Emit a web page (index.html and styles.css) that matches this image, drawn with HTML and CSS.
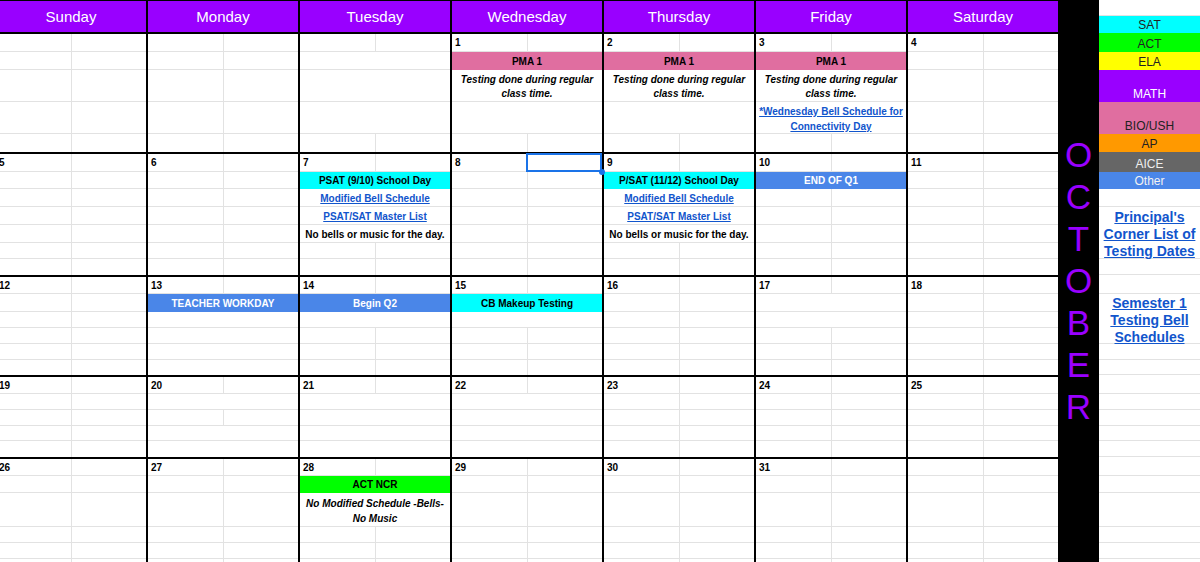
FILE: index.html
```html
<!DOCTYPE html>
<html>
<head>
<meta charset="utf-8">
<link rel="stylesheet" href="styles.css">
</head>
<body>
<div class="sheet">
  <div class="cal">
    <div class="hdr">
      <div class="hcell">Sunday</div>
      <div class="hcell">Monday</div>
      <div class="hcell">Tuesday</div>
      <div class="hcell">Wednesday</div>
      <div class="hcell">Thursday</div>
      <div class="hcell">Friday</div>
      <div class="hcell">Saturday</div>
    </div>

    <div class="week w1">
      <div class="day"><div class="r s"></div><div class="r s"></div><div class="r s"></div><div class="r s"></div><div class="r s"></div></div>
      <div class="day"><div class="r s"></div><div class="r s"></div><div class="r s"></div><div class="r s"></div><div class="r s"></div></div>
      <div class="day"><div class="r s"></div><div class="r"></div><div class="r"></div><div class="r"></div><div class="r s"></div></div>
      <div class="day">
        <div class="r s d"><span class="num">1</span></div>
        <div class="r bar pink">PMA 1</div>
        <div class="r note">Testing done during regular class time.</div>
        <div class="r"></div>
        <div class="r s"></div>
      </div>
      <div class="day">
        <div class="r s d"><span class="num">2</span></div>
        <div class="r bar pink">PMA 1</div>
        <div class="r note">Testing done during regular class time.</div>
        <div class="r"></div>
        <div class="r s"></div>
      </div>
      <div class="day">
        <div class="r s d"><span class="num">3</span></div>
        <div class="r bar pink">PMA 1</div>
        <div class="r note">Testing done during regular class time.</div>
        <div class="r wrap"><a class="lnk">*Wednesday Bell Schedule for Connectivity Day</a></div>
        <div class="r s"></div>
      </div>
      <div class="day">
        <div class="r s d"><span class="num">4</span></div>
        <div class="r s"></div><div class="r s"></div><div class="r s"></div><div class="r s"></div>
      </div>
    </div>

    <div class="week w2">
      <div class="day">
        <div class="r s d"><span class="num">5</span></div>
        <div class="r s"></div><div class="r s"></div><div class="r s"></div><div class="r s"></div><div class="r s"></div><div class="r s"></div>
      </div>
      <div class="day">
        <div class="r s d"><span class="num">6</span></div>
        <div class="r s"></div><div class="r s"></div><div class="r s"></div><div class="r s"></div><div class="r s"></div><div class="r s"></div>
      </div>
      <div class="day">
        <div class="r s d"><span class="num">7</span></div>
        <div class="r bar cyan">PSAT (9/10) School Day</div>
        <div class="r txt"><a class="lnk">Modified Bell Schedule</a></div>
        <div class="r txt"><a class="lnk">PSAT/SAT Master List</a></div>
        <div class="r txt">No bells or music for the day.</div>
        <div class="r s"></div><div class="r s"></div>
      </div>
      <div class="day">
        <div class="r s d"><span class="num">8</span><span class="sel"><span class="dot"></span></span></div>
        <div class="r s"></div><div class="r s"></div><div class="r s"></div><div class="r s"></div><div class="r s"></div><div class="r s"></div>
      </div>
      <div class="day">
        <div class="r s d"><span class="num">9</span></div>
        <div class="r bar cyan">P/SAT (11/12) School Day</div>
        <div class="r txt"><a class="lnk">Modified Bell Schedule</a></div>
        <div class="r txt"><a class="lnk">PSAT/SAT Master List</a></div>
        <div class="r txt">No bells or music for the day.</div>
        <div class="r s"></div><div class="r s"></div>
      </div>
      <div class="day">
        <div class="r s d"><span class="num">10</span></div>
        <div class="r bar blue">END OF Q1</div>
        <div class="r s"></div><div class="r s"></div><div class="r s"></div><div class="r s"></div><div class="r s"></div>
      </div>
      <div class="day">
        <div class="r s d"><span class="num">11</span></div>
        <div class="r s"></div><div class="r s"></div><div class="r s"></div><div class="r s"></div><div class="r s"></div><div class="r s"></div>
      </div>
    </div>

    <div class="week w3">
      <div class="day">
        <div class="r s d"><span class="num">12</span></div>
        <div class="r s"></div><div class="r s"></div><div class="r s"></div><div class="r s"></div><div class="r s"></div>
      </div>
      <div class="day">
        <div class="r s d"><span class="num">13</span></div>
        <div class="r bar blue">TEACHER WORKDAY</div>
        <div class="r"></div><div class="r"></div><div class="r"></div><div class="r"></div>
      </div>
      <div class="day">
        <div class="r s d"><span class="num">14</span></div>
        <div class="r bar blue">Begin Q2</div>
        <div class="r"></div><div class="r s"></div><div class="r s"></div><div class="r s"></div>
      </div>
      <div class="day">
        <div class="r s d"><span class="num">15</span></div>
        <div class="r bar cyan">CB Makeup Testing</div>
        <div class="r"></div><div class="r s"></div><div class="r s"></div><div class="r s"></div>
      </div>
      <div class="day">
        <div class="r s d"><span class="num">16</span></div>
        <div class="r s"></div><div class="r s"></div><div class="r s"></div><div class="r s"></div><div class="r s"></div>
      </div>
      <div class="day">
        <div class="r s d"><span class="num">17</span></div>
        <div class="r"></div><div class="r"></div><div class="r s"></div><div class="r s"></div><div class="r s"></div>
      </div>
      <div class="day">
        <div class="r s d"><span class="num">18</span></div>
        <div class="r s"></div><div class="r s"></div><div class="r s"></div><div class="r s"></div><div class="r s"></div>
      </div>
    </div>

    <div class="week w4">
      <div class="day">
        <div class="r s d"><span class="num">19</span></div>
        <div class="r s"></div><div class="r s"></div><div class="r s"></div><div class="r s"></div>
      </div>
      <div class="day">
        <div class="r s d"><span class="num">20</span></div>
        <div class="r"></div><div class="r s"></div><div class="r"></div><div class="r"></div>
      </div>
      <div class="day">
        <div class="r s d"><span class="num">21</span></div>
        <div class="r"></div><div class="r"></div><div class="r"></div><div class="r"></div>
      </div>
      <div class="day">
        <div class="r s d"><span class="num">22</span></div>
        <div class="r"></div><div class="r"></div><div class="r"></div><div class="r"></div>
      </div>
      <div class="day">
        <div class="r s d"><span class="num">23</span></div>
        <div class="r s"></div><div class="r s"></div><div class="r s"></div><div class="r s"></div>
      </div>
      <div class="day">
        <div class="r s d"><span class="num">24</span></div>
        <div class="r s"></div><div class="r s"></div><div class="r s"></div><div class="r s"></div>
      </div>
      <div class="day">
        <div class="r s d"><span class="num">25</span></div>
        <div class="r s"></div><div class="r s"></div><div class="r s"></div><div class="r s"></div>
      </div>
    </div>

    <div class="week w5">
      <div class="day">
        <div class="r s d"><span class="num">26</span></div>
        <div class="r s"></div><div class="r s"></div><div class="r s"></div><div class="r s"></div><div class="r s"></div>
      </div>
      <div class="day">
        <div class="r s d"><span class="num">27</span></div>
        <div class="r s"></div><div class="r s"></div><div class="r s"></div><div class="r s"></div><div class="r s"></div>
      </div>
      <div class="day">
        <div class="r s d"><span class="num">28</span></div>
        <div class="r bar green">ACT NCR</div>
        <div class="r note n2">No Modified Schedule -Bells- No Music</div>
        <div class="r s"></div><div class="r s"></div><div class="r s"></div>
      </div>
      <div class="day">
        <div class="r s d"><span class="num">29</span></div>
        <div class="r s"></div><div class="r s"></div><div class="r s"></div><div class="r s"></div><div class="r s"></div>
      </div>
      <div class="day">
        <div class="r s d"><span class="num">30</span></div>
        <div class="r s"></div><div class="r s"></div><div class="r s"></div><div class="r s"></div><div class="r s"></div>
      </div>
      <div class="day">
        <div class="r s d"><span class="num">31</span></div>
        <div class="r s"></div><div class="r s"></div><div class="r s"></div><div class="r s"></div><div class="r s"></div>
      </div>
      <div class="day">
        <div class="r s"></div><div class="r s"></div><div class="r s"></div><div class="r s"></div><div class="r s"></div><div class="r s"></div>
      </div>
    </div>
  </div>

  <div class="month">
    <span>O</span><span>C</span><span>T</span><span>O</span><span>B</span><span>E</span><span>R</span>
  </div>

  <div class="legend">
    <div class="lc h16"></div>
    <div class="lc h17 key k-sat">SAT</div>
    <div class="lc h19 key k-act">ACT</div>
    <div class="lc h18 key k-ela">ELA</div>
    <div class="lc h32 key k-math">MATH</div>
    <div class="lc h32 key k-bio">BIO/USH</div>
    <div class="lc h18 key k-ap">AP</div>
    <div class="lc h20 key k-aice">AICE</div>
    <div class="lc h17 key k-other">Other</div>
    <div class="lc h18"></div>
    <div class="lc h52 big"><a class="lnk">Principal's Corner List of Testing Dates</a></div>
    <div class="lc h16"></div>
    <div class="lc h19"></div>
    <div class="lc h50 big"><a class="lnk">Semester 1 Testing Bell Schedules</a></div>
    <div class="lc h16"></div>
    <div class="lc h15"></div>
    <div class="lc h19"></div>
    <div class="lc h16"></div>
    <div class="lc h16"></div>
    <div class="lc h15"></div>
    <div class="lc h16"></div>
    <div class="lc h19"></div>
    <div class="lc h17"></div>
    <div class="lc h34"></div>
    <div class="lc h16"></div>
    <div class="lc h16"></div>
    <div class="lc h16"></div>
  </div>
</div>
</body>
</html>
```

FILE: styles.css
```css
html, body {
  margin: 0;
  padding: 0;
}

body {
  width: 1200px;
  height: 562px;
  overflow: hidden;
  background: #fff;
  font-family: "Liberation Sans", Arial, sans-serif;
  color: #000;
}

.sheet {
  display: flex;
  margin-left: -4px;
  width: 1204px;
  height: 562px;
}

/* ---------- calendar ---------- */
.cal {
  flex: none;
  width: 1062px;
  height: 562px;
  box-sizing: border-box;
  padding-top: 1px;
  background: #000;
  display: flex;
  flex-direction: column;
  row-gap: 2px;
  overflow: hidden;
}

.hdr,
.week {
  flex: none;
  display: grid;
  grid-template-columns: repeat(7, 150px);
  column-gap: 2px;
}

.hdr { height: 31px; }

.hcell {
  background: #9900ff;
  color: #fff;
  font-size: 15px;
  display: flex;
  align-items: center;
  justify-content: center;
}

.w1 { height: 118px; }
.w2 { height: 121px; }
.w3 { height: 98px; }
.w4 { height: 80px; }
.w5 { flex: 1; }

.day {
  background: #fff;
  display: flex;
  flex-direction: column;
}

.r {
  flex: none;
  box-sizing: border-box;
  border-bottom: 1px solid #e2e2e2;
  position: relative;
}

.r:last-child { border-bottom: 0; }

.w5 .r:last-child { border-bottom: 1px solid #e2e2e2; }

/* split (unmerged) rows show the middle grid line */
.s::after {
  content: "";
  position: absolute;
  left: 75px;
  top: 0;
  bottom: 0;
  width: 1px;
  background: #e2e2e2;
}

/* row heights per week */
.w1 .r:nth-child(1) { height: 18px; }
.w1 .r:nth-child(2) { height: 18px; }
.w1 .r:nth-child(3) { height: 32px; }
.w1 .r:nth-child(4) { height: 32px; }
.w1 .r:nth-child(5) { height: 18px; }

.w2 .r:nth-child(1) { height: 18px; }
.w2 .r:nth-child(2) { height: 17px; }
.w2 .r:nth-child(3) { height: 18px; }
.w2 .r:nth-child(4) { height: 18px; }
.w2 .r:nth-child(5) { height: 18px; }
.w2 .r:nth-child(6) { height: 16px; }
.w2 .r:nth-child(7) { height: 16px; }

.w3 .r:nth-child(1) { height: 17px; }
.w3 .r:nth-child(2) { height: 18px; }
.w3 .r:nth-child(3) { height: 16px; }
.w3 .r:nth-child(4) { height: 16px; }
.w3 .r:nth-child(5) { height: 16px; }
.w3 .r:nth-child(6) { height: 15px; }

.w4 .r:nth-child(1) { height: 17px; }
.w4 .r:nth-child(2) { height: 16px; }
.w4 .r:nth-child(3) { height: 16px; }
.w4 .r:nth-child(4) { height: 15px; }
.w4 .r:nth-child(5) { height: 16px; }

.w5 .r:nth-child(1) { height: 17px; }
.w5 .r:nth-child(2) { height: 17px; }
.w5 .r:nth-child(3) { height: 34px; }
.w5 .r:nth-child(4) { height: 16px; }
.w5 .r:nth-child(5) { height: 16px; }
.w5 .r:nth-child(6) { height: 16px; }

/* date number row */
.d {
  display: flex;
  align-items: center;
  padding-top: 1px;
}

.num {
  font-size: 10px;
  font-weight: bold;
  padding-left: 3px;
  line-height: 12px;
}

/* event bars */
.bar,
.txt {
  display: flex;
  align-items: center;
  justify-content: center;
  font-size: 10px;
  font-weight: bold;
  white-space: nowrap;
  padding-top: 1px;
}

.bar { border-bottom-color: transparent; }

.pink { background: #e06ea0; }
.cyan { background: #00ffff; }
.green { background: #00ff00; }
.blue { background: #4a86e8; color: #fff; }

.note {
  font-size: 10px;
  font-weight: bold;
  font-style: italic;
  line-height: 14px;
  text-align: center;
  padding: 3px 4px 0;
}

.n2 {
  line-height: 15px;
  padding-top: 3px;
}

.wrap {
  font-size: 10px;
  font-weight: bold;
  line-height: 15px;
  text-align: center;
  padding: 2px 2px 0;
}

.lnk {
  color: #1155cc;
  text-decoration: underline;
  font-weight: bold;
}

/* selected cell overlay */
.sel {
  position: absolute;
  left: 74px;
  top: -1px;
  right: 0;
  bottom: -1px;
  border: 2px solid #1a73e8;
  z-index: 5;
}

.dot {
  position: absolute;
  right: -5px;
  bottom: -5px;
  width: 6px;
  height: 6px;
  border-radius: 50%;
  background: #1a73e8;
}

/* ---------- month column ---------- */
.month {
  flex: none;
  width: 41px;
  height: 562px;
  box-sizing: border-box;
  background: #000;
  color: #9900ff;
  font-size: 35px;
  line-height: 42px;
  padding-top: 134px;
  display: flex;
  flex-direction: column;
  align-items: center;
}

/* ---------- legend column ---------- */
.legend {
  flex: none;
  width: 101px;
  height: 562px;
  overflow: hidden;
  background: #fff;
  display: flex;
  flex-direction: column;
}

.lc {
  flex: none;
  box-sizing: border-box;
  border-bottom: 1px solid #e2e2e2;
}

.h15 { height: 15px; }
.h16 { height: 16px; }
.h17 { height: 17px; }
.h18 { height: 18px; }
.h19 { height: 19px; }
.h20 { height: 20px; }
.h32 { height: 32px; }
.h34 { height: 34px; }
.h50 { height: 50px; }
.h52 { height: 52px; }

.key {
  border-bottom: 0;
  font-size: 12px;
  line-height: 14px;
  display: flex;
  align-items: flex-end;
  justify-content: center;
  padding-bottom: 1px;
  color: #222;
}

.k-sat { background: #00ffff; }
.k-act { background: #00ff00; }
.k-ela { background: #ffff00; }
.k-math { background: #9900ff; color: #fff; }
.k-bio { background: #e06ea0; }
.k-ap { background: #ff9900; }
.k-aice { background: #666666; color: #eee; }
.k-other { background: #4a86e8; color: #f2f2f2; }

.big {
  display: flex;
  align-items: center;
  justify-content: center;
  text-align: center;
  font-size: 14px;
  line-height: 17px;
  padding: 3px 1px 0;
}
```
